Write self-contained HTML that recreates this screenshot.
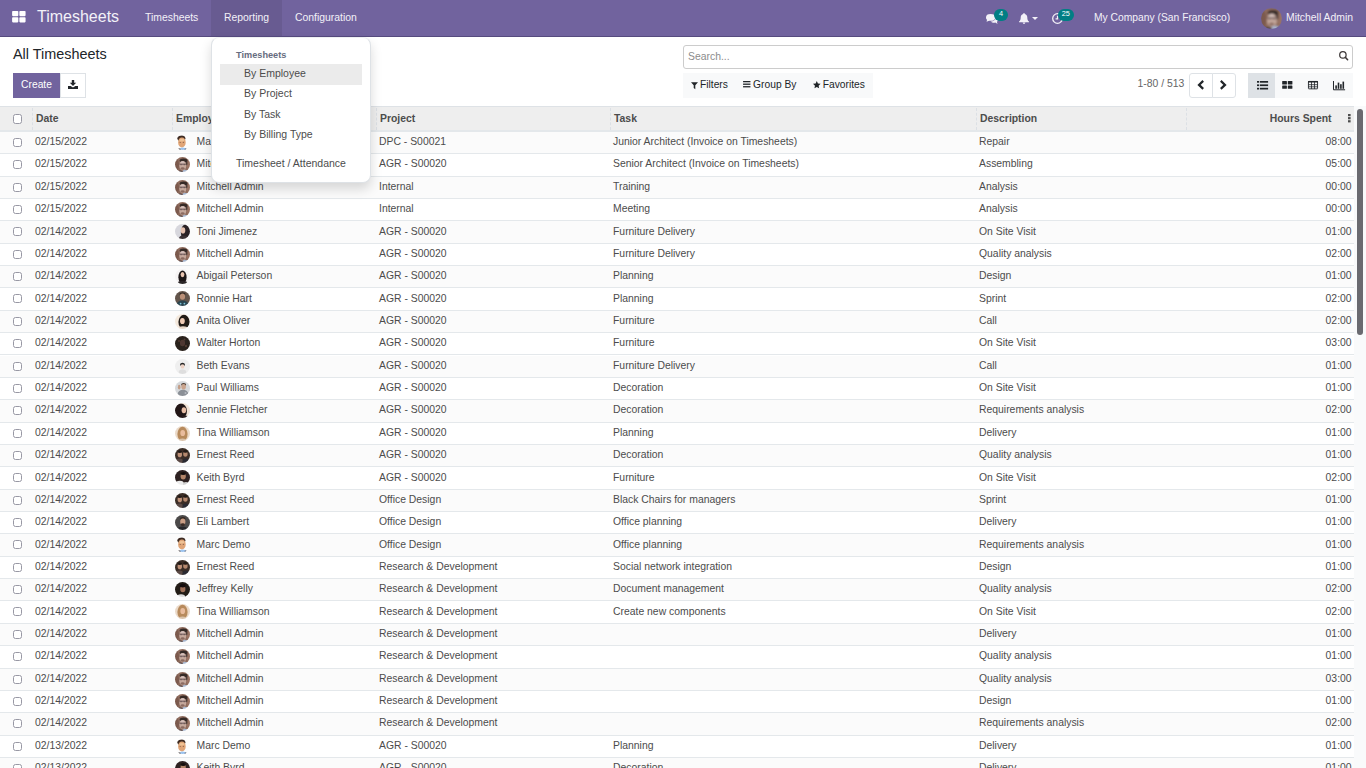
<!DOCTYPE html>
<html lang="en"><head><meta charset="utf-8"><title>Odoo - All Timesheets</title>
<style>
*{box-sizing:border-box;margin:0;padding:0}
html,body{width:1366px;height:768px;overflow:hidden;background:#fff}
body{font-family:"Liberation Sans",sans-serif;font-size:10.4px;color:#4c4c4c;position:relative}
.abs{position:absolute}
svg{position:absolute;overflow:visible}
/* navbar */
.nav{position:absolute;left:0;top:0;width:1366px;height:37px;background:#71639e;border-bottom:1px solid #564b7e;color:#fff}
.nav span{position:absolute;white-space:nowrap}
.nav .brand{left:37px;top:7px;font-size:16px;line-height:20px;color:#f3f1f8}
.nav .mi{top:0;height:36px;line-height:36px;font-size:10.4px;color:#f3f1f8}
.nav .act{left:211px;top:0;width:71px;height:36px;background:#685b91}
.badge{position:absolute;top:9px;height:12px;border-radius:6px;background:#017e84;color:#fff;font-size:7.3px;line-height:9px;text-align:center}
.uav{position:absolute;left:1261px;top:8px;width:21px;height:21px}
/* control panel */
.title{position:absolute;left:13px;top:44px;font-size:14.42px;line-height:20px;color:#212529;white-space:nowrap}
.btn-create{position:absolute;left:13px;top:73px;width:47px;height:25px;background:#71639e;color:#fff;line-height:23px;text-align:center;font-size:10.25px}
.btn-dl{position:absolute;left:60px;top:73px;width:26px;height:25px;border:1px solid #dee2e6;background:#fff}
.search{position:absolute;left:683px;top:45px;width:670px;height:24px;border:1px solid #ccc;border-radius:3px;background:#fff}
.search span{position:absolute;left:4px;top:0;line-height:21px;color:#8c8c8c;font-size:10.4px}
.fbar{position:absolute;left:683px;top:73px;width:190px;height:25px;background:#f8f9fa}
.fbar span{position:absolute;top:0;line-height:24px;font-size:10.25px;color:#212529;white-space:nowrap}
.pager{position:absolute;top:73px;line-height:21px;color:#666;white-space:nowrap}
.pgbtn{position:absolute;top:73px;height:25px;border:1px solid #dee2e6;background:#fff}
.vsw{position:absolute;top:73px;height:25px;width:26px;background:#f8f9fa}
.vsw.on{background:#dee2e6}
/* table */
.thead{position:absolute;left:0;top:106px;width:1354px;height:26px;background:#eee;border-top:1px solid #dee2e6;border-bottom:2px solid #e4e8eb;font-weight:bold;color:#4c4c4c}
.thead span{position:absolute;top:0;line-height:23px;white-space:nowrap}
.thead i{position:absolute;top:1px;height:22px;width:0;border-left:1px dashed #dce0e5}
.tbody{position:absolute;left:0;top:0;width:1354px;height:768px;overflow:hidden}
.tr{position:absolute;left:0;width:1354px;height:22.36px;border-bottom:1px solid #e4e8eb;background:#fff}
.tr.odd{background:#fbfbfb}
.tr .c{position:absolute;top:.22px;line-height:20px;white-space:nowrap}
.cb{position:absolute;left:13px;top:6px;width:9px;height:9px;border:1px solid #9898a4;border-radius:2.5px;background:#fff}
.date{left:35px}
.emp{left:196.5px}
.proj{left:379px}
.task{left:613px}
.desc{left:979px}
.hrs{right:2.4px}
.av{position:absolute;left:175px;top:3px;width:15px;height:15px;overflow:hidden}
/* scrollbar */
.sbar{position:absolute;left:1354px;top:106px;width:12px;height:662px;background:#f9fafb}
.sbar i{position:absolute;left:3px;top:3px;width:6px;height:226px;border-radius:3px;background:#6a6a70}
/* dropdown */
.dd{position:absolute;left:211px;top:37px;width:159.5px;height:145.6px;background:#fff;border-radius:8px;box-shadow:0 6px 12px rgba(0,0,0,.15);border:1px solid #dee2e6;border-top-color:#eef0f2}
.dd span{position:absolute;white-space:nowrap;color:#4c4c4c;line-height:20px;font-size:10.5px}
.dd .hl{left:8px;top:26px;width:142px;height:21px;background:#ebebeb}

</style></head>
<body>
<svg width="0" height="0" style="position:absolute"><defs><filter id="bl" x="-10%" y="-10%" width="120%" height="120%"><feGaussianBlur stdDeviation="0.6"/></filter><clipPath id="cc"><circle cx="7.5" cy="7.5" r="7.5"/></clipPath><symbol id="a-mitch" viewBox="0 0 15 15"><g clip-path="url(#cc)"><g filter="url(#bl)"><rect x="0" y="0" width="15" height="15" fill="#8f6c5d"/><ellipse cx="1.5" cy="8" rx="2.5" ry="6" fill="#75564b" opacity="0.8"/><ellipse cx="13.6" cy="7" rx="2" ry="5" fill="#9c7565" opacity="0.8"/><ellipse cx="8.6" cy="3.5" rx="3.9" ry="2.1" fill="#352a28"/><ellipse cx="11.5" cy="6" rx="1" ry="2.4" fill="#3b2f2c" opacity="0.8"/><ellipse cx="7.8" cy="8.7" rx="3.5" ry="4.8" fill="#c4a79b"/><ellipse cx="7.5" cy="5.3" rx="2.2" ry="1.1" fill="#d6c2be" opacity="0.9"/><rect x="4.5" y="6.7" width="6.6" height="1.0" fill="#463b42" opacity="0.7"/><ellipse cx="6.1" cy="7.7" rx="0.8" ry="0.6" fill="#5d4a48" opacity="0.6"/><ellipse cx="9.4" cy="7.7" rx="0.8" ry="0.6" fill="#5d4a48" opacity="0.6"/><ellipse cx="7.6" cy="11.5" rx="2.0" ry="1.2" fill="#8b6b60"/><ellipse cx="10.2" cy="14.5" rx="2.8" ry="1.7" fill="#a8b8d0"/><ellipse cx="5" cy="14.9" rx="2.8" ry="1.5" fill="#4d4042"/></g></g></symbol><symbol id="a-marc" viewBox="0 0 15 15"><g clip-path="url(#cc)"><g filter="url(#bl)"><rect x="0" y="0" width="15" height="15" fill="#fdfdfd"/><ellipse cx="6.4" cy="3.3" rx="4.0" ry="2.9" fill="#3d2c23"/><ellipse cx="6.9" cy="7.4" rx="3.8" ry="5.0" fill="#e0a577"/><ellipse cx="6.9" cy="5.2" rx="2.5" ry="1.3" fill="#f1c699" opacity="0.9"/><ellipse cx="5.2" cy="7.5" rx="0.7" ry="0.6" fill="#6a4a3a" opacity="0.7"/><ellipse cx="8.4" cy="7.3" rx="0.7" ry="0.6" fill="#6a4a3a" opacity="0.7"/><ellipse cx="7.6" cy="14.1" rx="3.0" ry="1.6" fill="#9cc4f0"/><ellipse cx="4.2" cy="14.6" rx="1.4" ry="1.0" fill="#2a2020"/><ellipse cx="10.7" cy="14.3" rx="1.2" ry="0.9" fill="#2b3a55"/></g></g></symbol><symbol id="a-toni" viewBox="0 0 15 15"><g clip-path="url(#cc)"><g filter="url(#bl)"><rect x="0" y="0" width="15" height="15" fill="#d7d7dd"/><ellipse cx="10.5" cy="8.5" rx="4.6" ry="8" fill="#2a2125"/><ellipse cx="8.0" cy="6.4" rx="2.3" ry="3.1" fill="#e6c2b0"/><ellipse cx="8.5" cy="14.5" rx="4.5" ry="3" fill="#3a3036"/></g></g></symbol><symbol id="a-abigail" viewBox="0 0 15 15"><g clip-path="url(#cc)"><g filter="url(#bl)"><rect x="0" y="0" width="15" height="15" fill="#f6f4f4"/><ellipse cx="7.5" cy="8.2" rx="4.1" ry="6.6" fill="#1b1617"/><ellipse cx="7.5" cy="5.6" rx="1.9" ry="2.6" fill="#e9c5b0"/><ellipse cx="7.5" cy="14.4" rx="5" ry="2.4" fill="#2b2628"/></g></g></symbol><symbol id="a-ronnie" viewBox="0 0 15 15"><g clip-path="url(#cc)"><g filter="url(#bl)"><rect x="0" y="0" width="15" height="15" fill="#63554c"/><ellipse cx="7.5" cy="3.2" rx="2.9" ry="1.8" fill="#2c2420"/><ellipse cx="7.5" cy="5.6" rx="2.6" ry="3.2" fill="#ba9078"/><ellipse cx="7.5" cy="14" rx="6" ry="4.6" fill="#2c4550"/><ellipse cx="5.6" cy="12.6" rx="0.9" ry="0.9" fill="#7fc4d8"/><ellipse cx="9.4" cy="12.6" rx="0.9" ry="0.9" fill="#7fc4d8"/></g></g></symbol><symbol id="a-anita" viewBox="0 0 15 15"><g clip-path="url(#cc)"><g filter="url(#bl)"><rect x="0" y="0" width="15" height="15" fill="#f4e9dd"/><ellipse cx="9" cy="8" rx="5.6" ry="7.2" fill="#241b19"/><ellipse cx="7.4" cy="7.0" rx="2.4" ry="3.1" fill="#f0ccb5"/><ellipse cx="8" cy="14.6" rx="4.5" ry="2.4" fill="#e8d8c8"/></g></g></symbol><symbol id="a-walter" viewBox="0 0 15 15"><g clip-path="url(#cc)"><g filter="url(#bl)"><rect x="0" y="0" width="15" height="15" fill="#2a211f"/><ellipse cx="7.5" cy="7" rx="2.6" ry="3.2" fill="#5a4034" opacity="0.8"/><ellipse cx="4" cy="5" rx="1" ry="1" fill="#6b4a38" opacity="0.6"/><ellipse cx="11" cy="10" rx="1.2" ry="1.2" fill="#6b4a38" opacity="0.6"/><ellipse cx="9.5" cy="3.5" rx="0.9" ry="0.9" fill="#7a5a44" opacity="0.5"/></g></g></symbol><symbol id="a-beth" viewBox="0 0 15 15"><g clip-path="url(#cc)"><g filter="url(#bl)"><rect x="0" y="0" width="15" height="15" fill="#efefef"/><ellipse cx="7.5" cy="5.6" rx="2.4" ry="1.9" fill="#262626"/><ellipse cx="7.5" cy="7.4" rx="1.9" ry="2.2" fill="#edd2c5"/><ellipse cx="7.5" cy="13.2" rx="3.8" ry="2.8" fill="#dedede"/></g></g></symbol><symbol id="a-paul" viewBox="0 0 15 15"><g clip-path="url(#cc)"><g filter="url(#bl)"><rect x="0" y="0" width="15" height="15" fill="#d6d9dc"/><ellipse cx="8.6" cy="3.6" rx="2.5" ry="1.6" fill="#4a3a30"/><ellipse cx="8.6" cy="5.7" rx="2.3" ry="2.8" fill="#caa48d"/><ellipse cx="8" cy="13" rx="5.2" ry="4.2" fill="#8b9097"/><ellipse cx="4.2" cy="6.2" rx="1.3" ry="2.4" fill="#c39d86"/><ellipse cx="10.5" cy="12" rx="1" ry="1" fill="#b5bac0"/></g></g></symbol><symbol id="a-jennie" viewBox="0 0 15 15"><g clip-path="url(#cc)"><g filter="url(#bl)"><rect x="0" y="0" width="15" height="15" fill="#f2e4d7"/><ellipse cx="5.8" cy="8" rx="6.2" ry="7.6" fill="#211716"/><ellipse cx="8.9" cy="7.2" rx="2.3" ry="3.0" fill="#e8bda4"/><ellipse cx="10" cy="14.4" rx="3.5" ry="2" fill="#2a1f1d"/></g></g></symbol><symbol id="a-tina" viewBox="0 0 15 15"><g clip-path="url(#cc)"><g filter="url(#bl)"><rect x="0" y="0" width="15" height="15" fill="#ebdac9"/><ellipse cx="7.5" cy="8" rx="5.1" ry="7.2" fill="#b78a5b"/><ellipse cx="7.7" cy="7.0" rx="2.4" ry="3.1" fill="#e9bc9d"/><ellipse cx="7.5" cy="14.6" rx="4" ry="2" fill="#d9c2aa"/></g></g></symbol><symbol id="a-ernest" viewBox="0 0 15 15"><g clip-path="url(#cc)"><g filter="url(#bl)"><rect x="0" y="0" width="15" height="15" fill="#3b2d28"/><ellipse cx="4.8" cy="6.4" rx="2.2" ry="2.8" fill="#be9177"/><ellipse cx="10.4" cy="6.0" rx="2.2" ry="2.8" fill="#b6896e"/><ellipse cx="4.8" cy="3.8" rx="2.2" ry="1.3" fill="#241a17"/><ellipse cx="10.4" cy="3.4" rx="2.2" ry="1.3" fill="#241a17"/><ellipse cx="4.5" cy="13.5" rx="3.6" ry="3" fill="#5a4a44"/><ellipse cx="11" cy="13.5" rx="3.6" ry="3" fill="#2a2a30"/></g></g></symbol><symbol id="a-keith" viewBox="0 0 15 15"><g clip-path="url(#cc)"><g filter="url(#bl)"><rect x="0" y="0" width="15" height="15" fill="#2d2320"/><ellipse cx="8.2" cy="6.3" rx="2.6" ry="3.2" fill="#b48569"/><ellipse cx="8.2" cy="3.4" rx="2.7" ry="1.5" fill="#17110f"/><ellipse cx="4.8" cy="14" rx="4.2" ry="3.2" fill="#ececec"/><ellipse cx="11" cy="14.5" rx="3" ry="2.4" fill="#d0d0d0"/></g></g></symbol><symbol id="a-eli" viewBox="0 0 15 15"><g clip-path="url(#cc)"><g filter="url(#bl)"><rect x="0" y="0" width="15" height="15" fill="#4c4849"/><ellipse cx="7.8" cy="3.8" rx="2.8" ry="1.8" fill="#352822"/><ellipse cx="7.8" cy="6.8" rx="2.6" ry="3.3" fill="#c99d84"/><ellipse cx="7.8" cy="9.7" rx="2.1" ry="1.4" fill="#3a2b25"/><ellipse cx="7.5" cy="14.6" rx="5.5" ry="3" fill="#28282b"/></g></g></symbol><symbol id="a-jeffrey" viewBox="0 0 15 15"><g clip-path="url(#cc)"><g filter="url(#bl)"><rect x="0" y="0" width="15" height="15" fill="#221a18"/><ellipse cx="7.8" cy="7.0" rx="2.6" ry="3.2" fill="#9e7058"/><ellipse cx="7.8" cy="3.8" rx="2.9" ry="1.7" fill="#120d0c"/><ellipse cx="6" cy="14.8" rx="4.2" ry="2.6" fill="#dcdcdc"/></g></g></symbol></defs></svg>
<div class="nav">
 <svg style="left:11.6px;top:10.8px" width="13.7" height="11.4" viewBox="0 0 13 11"><rect x="0" y="0" width="6" height="5" rx="0.8" fill="#fff"/><rect x="7" y="0" width="6" height="5" rx="0.8" fill="#fff"/><rect x="0" y="6" width="6" height="5" rx="0.8" fill="#fff"/><rect x="7" y="6" width="6" height="5" rx="0.8" fill="#fff"/></svg>
 <span class="brand">Timesheets</span>
 <div class="abs act"></div>
 <span class="mi" style="left:145px">Timesheets</span>
 <span class="mi" style="left:224px">Reporting</span>
 <span class="mi" style="left:295px">Configuration</span>
 <!-- comments icon -->
 <svg style="left:986px;top:14px" width="12" height="10" viewBox="0 0 12 10"><ellipse cx="4.6" cy="3.4" rx="4.6" ry="3.4" fill="#f3f1f8"/><path d="M1.2 5 L0.6 7.8 L3.6 6.4 Z" fill="#f3f1f8"/><path d="M4.5 7.6 C6 8.9 8.2 9 9.3 8.6 L11.6 9.9 L10.9 7.9 C11.8 7.2 12.2 5.9 11.3 4.6 C11 3.9 10.4 3.5 9.8 3.3 C9.9 5.8 7.6 7.5 4.5 7.6 Z" fill="#f3f1f8"/></svg>
 <div class="badge" style="left:994px;width:14px">4</div>
 <!-- bell -->
 <svg style="left:1019px;top:13px" width="10" height="11" viewBox="0 0 10 11"><path d="M5 0 C5.5 0 5.8 .4 5.8 .9 C7.4 1.3 8.3 2.7 8.3 4.4 C8.3 6.6 8.9 7.7 10 8.6 L10 9.2 L0 9.2 L0 8.6 C1.1 7.7 1.7 6.6 1.7 4.4 C1.7 2.7 2.6 1.3 4.2 .9 C4.2 .4 4.5 0 5 0 Z" fill="#f3f1f8"/><path d="M3.7 9.6 L6.3 9.6 C6.3 10.4 5.7 11 5 11 C4.3 11 3.7 10.4 3.7 9.6 Z" fill="#f3f1f8"/></svg>
 <svg style="left:1032px;top:17px" width="6" height="3" viewBox="0 0 6 3"><path d="M0 0 L6 0 L3 3 Z" fill="#f3f1f8"/></svg>
 <!-- clock -->
 <svg style="left:1051.7px;top:13.1px" width="11" height="11" viewBox="0 0 11 11"><circle cx="5.5" cy="5.5" r="4.8" fill="none" stroke="#f3f1f8" stroke-width="1.3"/><path d="M5.5 2.8 L5.5 5.8 L3.6 5.8" fill="none" stroke="#f3f1f8" stroke-width="1.2"/></svg>
 <div class="badge" style="left:1057.5px;width:16.5px;height:11.5px">25</div>
 <span class="mi" style="left:1094px;font-size:10.31px">My Company (San Francisco)</span>
 <svg class="uav" viewBox="0 0 15 15"><use href="#a-mitch"/></svg>
 <span class="mi" style="left:1286px">Mitchell Admin</span>
</div>
<div class="title">All Timesheets</div>
<div class="btn-create">Create</div>
<div class="btn-dl"><svg style="left:7px;top:6px" width="10" height="9" viewBox="0 0 10 9"><path d="M3.8 0 L6.2 0 L6.2 2.8 L8.2 2.8 L5 6 L1.8 2.8 L3.8 2.8 Z" fill="#212529"/><path d="M0 6 L2.6 6 L5 7.6 L7.4 6 L10 6 L10 9 L0 9 Z" fill="#212529"/></svg></div>
<div class="search"><span>Search...</span>
 <svg style="left:654.9px;top:5.2px" width="10" height="10" viewBox="0 0 10 10"><circle cx="3.9" cy="3.9" r="3.2" fill="none" stroke="#3d3838" stroke-width="1.25"/><path d="M6.3 6.3 L8.6 8.7" stroke="#3d3838" stroke-width="1.6" stroke-linecap="round"/></svg>
</div>
<div class="fbar">
 <svg style="left:7.8px;top:9px" width="7" height="7.4" viewBox="0 0 7 7"><path d="M0 0 L7 0 L4.3 3 L4.3 7 L2.7 5.8 L2.7 3 Z" fill="#212529"/></svg>
 <span style="left:17px">Filters</span>
 <svg style="left:60.2px;top:8.4px" width="7.5" height="6.4" viewBox="0 0 7.5 6.5"><rect x="0" y="0" width="7.5" height="1.3" fill="#212529"/><rect x="0" y="2.6" width="7.5" height="1.3" fill="#212529"/><rect x="0" y="5.2" width="7.5" height="1.3" fill="#212529"/></svg>
 <span style="left:70.1px">Group By</span>
 <svg style="left:129.8px;top:8px" width="7.6" height="7.4" viewBox="0 0 10 9.5"><path d="M5 0 L6.5 3.2 L10 3.6 L7.4 6 L8.1 9.5 L5 7.7 L1.9 9.5 L2.6 6 L0 3.6 L3.5 3.2 Z" fill="#212529"/></svg>
 <span style="left:139.7px">Favorites</span>
</div>
<div class="pager" style="left:1137.6px">1-80 / 513</div>
<div class="pgbtn" style="left:1189px;width:24px;border-radius:3px 0 0 3px"><svg style="left:7.3px;top:6.3px" width="8" height="10" viewBox="0 0 8 10"><path d="M6.2 .9 L2 4.9 L6.2 8.9" fill="none" stroke="#212529" stroke-width="2.2"/></svg></div>
<div class="pgbtn" style="left:1212px;width:24px;border-radius:0 3px 3px 0"><svg style="left:6.1px;top:6.3px" width="8" height="10" viewBox="0 0 8 10"><path d="M1.8 .9 L6 4.9 L1.8 8.9" fill="none" stroke="#212529" stroke-width="2.2"/></svg></div>
<div class="vsw on" style="left:1248px;width:27px"><svg style="left:8.7px;top:7.9px" width="11.1" height="8.5" viewBox="0 0 11.1 8.5"><rect x="0" y="0" width="2.2" height="1.7" fill="#212529"/><rect x="3" y="0" width="8.1" height="1.7" fill="#212529"/><rect x="0" y="3.4" width="2.2" height="1.7" fill="#212529"/><rect x="3" y="3.4" width="8.1" height="1.7" fill="#212529"/><rect x="0" y="6.8" width="2.2" height="1.7" fill="#212529"/><rect x="3" y="6.8" width="8.1" height="1.7" fill="#212529"/></svg></div>
<div class="vsw" style="left:1275px"><svg style="left:7px;top:8px" width="10.4" height="7.8" viewBox="0 0 10.4 7.8"><rect x=".2" y="0" width="4.7" height="3.4" rx=".5" fill="#212529"/><rect x="5.8" y="0" width="4.6" height="3.4" rx=".5" fill="#212529"/><rect x=".2" y="4.4" width="4.7" height="3.4" rx=".5" fill="#212529"/><rect x="5.8" y="4.4" width="4.6" height="3.4" rx=".5" fill="#212529"/></svg></div>
<div class="vsw" style="left:1301px"><svg style="left:6.9px;top:7.7px" width="10" height="8.3" viewBox="0 0 10 8.3"><rect x=".45" y=".45" width="9.1" height="7.4" rx=".4" fill="none" stroke="#212529" stroke-width=".9"/><rect x="0" y="0" width="10" height="1.6" rx=".4" fill="#212529"/><path d="M.4 3.7 H9.6 M.4 5.8 H9.6 M3.5 1 V7.9 M6.5 1 V7.9" stroke="#212529" stroke-width=".8" fill="none"/></svg></div>
<div class="vsw" style="left:1327px"><svg style="left:5.9px;top:7.7px" width="12.1" height="9.3" viewBox="0 0 12.1 9.3"><path d="M.5 0 V8.8 H12.1" fill="none" stroke="#212529" stroke-width="1"/><rect x="2.3" y="4.4" width="1.6" height="3.4" fill="#212529"/><rect x="4.7" y="1.6" width="1.6" height="6.2" fill="#212529"/><rect x="7.1" y="3.2" width="1.6" height="4.6" fill="#212529"/><rect x="9.5" y=".6" width="1.6" height="7.2" fill="#212529"/></svg></div>
<div class="thead">
 <div class="cb" style="top:7px;height:10px"></div>
 <i style="left:32px"></i><span style="left:36px">Date</span>
 <i style="left:172px"></i><span style="left:176px">Employee</span>
 <i style="left:376px"></i><span style="left:380px">Project</span>
 <i style="left:610px"></i><span style="left:614px">Task</span>
 <i style="left:976px"></i><span style="left:980px">Description</span>
 <i style="left:1186px"></i><span style="right:22.5px">Hours Spent</span>
 <svg style="left:1347.5px;top:7px" width="3" height="9" viewBox="0 0 3 9"><rect x="0" y="0" width="2.6" height="2.2" fill="#4c4c4c"/><rect x="0" y="3.1" width="2.6" height="2.2" fill="#4c4c4c"/><rect x="0" y="6.2" width="2.6" height="2.2" fill="#4c4c4c"/></svg>
</div>
<div class="sbar"><i></i></div>
<div class="tbody">
<div class="tr odd" style="top:131.90px"><span class="cb"></span><span class="c date">02/15/2022</span><svg class="av" viewBox="0 0 15 15"><use href="#a-marc"/></svg><span class="c emp">Marc Demo</span><span class="c proj">DPC - S00021</span><span class="c task">Junior Architect (Invoice on Timesheets)</span><span class="c desc">Repair</span><span class="c hrs">08:00</span></div>
<div class="tr" style="top:154.26px"><span class="cb"></span><span class="c date">02/15/2022</span><svg class="av" viewBox="0 0 15 15"><use href="#a-mitch"/></svg><span class="c emp">Mitchell Admin</span><span class="c proj">AGR - S00020</span><span class="c task">Senior Architect (Invoice on Timesheets)</span><span class="c desc">Assembling</span><span class="c hrs">05:00</span></div>
<div class="tr odd" style="top:176.62px"><span class="cb"></span><span class="c date">02/15/2022</span><svg class="av" viewBox="0 0 15 15"><use href="#a-mitch"/></svg><span class="c emp">Mitchell Admin</span><span class="c proj">Internal</span><span class="c task">Training</span><span class="c desc">Analysis</span><span class="c hrs">00:00</span></div>
<div class="tr" style="top:198.98px"><span class="cb"></span><span class="c date">02/15/2022</span><svg class="av" viewBox="0 0 15 15"><use href="#a-mitch"/></svg><span class="c emp">Mitchell Admin</span><span class="c proj">Internal</span><span class="c task">Meeting</span><span class="c desc">Analysis</span><span class="c hrs">00:00</span></div>
<div class="tr odd" style="top:221.34px"><span class="cb"></span><span class="c date">02/14/2022</span><svg class="av" viewBox="0 0 15 15"><use href="#a-toni"/></svg><span class="c emp">Toni Jimenez</span><span class="c proj">AGR - S00020</span><span class="c task">Furniture Delivery</span><span class="c desc">On Site Visit</span><span class="c hrs">01:00</span></div>
<div class="tr" style="top:243.70px"><span class="cb"></span><span class="c date">02/14/2022</span><svg class="av" viewBox="0 0 15 15"><use href="#a-mitch"/></svg><span class="c emp">Mitchell Admin</span><span class="c proj">AGR - S00020</span><span class="c task">Furniture Delivery</span><span class="c desc">Quality analysis</span><span class="c hrs">02:00</span></div>
<div class="tr odd" style="top:266.06px"><span class="cb"></span><span class="c date">02/14/2022</span><svg class="av" viewBox="0 0 15 15"><use href="#a-abigail"/></svg><span class="c emp">Abigail Peterson</span><span class="c proj">AGR - S00020</span><span class="c task">Planning</span><span class="c desc">Design</span><span class="c hrs">01:00</span></div>
<div class="tr" style="top:288.42px"><span class="cb"></span><span class="c date">02/14/2022</span><svg class="av" viewBox="0 0 15 15"><use href="#a-ronnie"/></svg><span class="c emp">Ronnie Hart</span><span class="c proj">AGR - S00020</span><span class="c task">Planning</span><span class="c desc">Sprint</span><span class="c hrs">02:00</span></div>
<div class="tr odd" style="top:310.78px"><span class="cb"></span><span class="c date">02/14/2022</span><svg class="av" viewBox="0 0 15 15"><use href="#a-anita"/></svg><span class="c emp">Anita Oliver</span><span class="c proj">AGR - S00020</span><span class="c task">Furniture</span><span class="c desc">Call</span><span class="c hrs">02:00</span></div>
<div class="tr" style="top:333.14px"><span class="cb"></span><span class="c date">02/14/2022</span><svg class="av" viewBox="0 0 15 15"><use href="#a-walter"/></svg><span class="c emp">Walter Horton</span><span class="c proj">AGR - S00020</span><span class="c task">Furniture</span><span class="c desc">On Site Visit</span><span class="c hrs">03:00</span></div>
<div class="tr odd" style="top:355.50px"><span class="cb"></span><span class="c date">02/14/2022</span><svg class="av" viewBox="0 0 15 15"><use href="#a-beth"/></svg><span class="c emp">Beth Evans</span><span class="c proj">AGR - S00020</span><span class="c task">Furniture Delivery</span><span class="c desc">Call</span><span class="c hrs">01:00</span></div>
<div class="tr" style="top:377.86px"><span class="cb"></span><span class="c date">02/14/2022</span><svg class="av" viewBox="0 0 15 15"><use href="#a-paul"/></svg><span class="c emp">Paul Williams</span><span class="c proj">AGR - S00020</span><span class="c task">Decoration</span><span class="c desc">On Site Visit</span><span class="c hrs">01:00</span></div>
<div class="tr odd" style="top:400.22px"><span class="cb"></span><span class="c date">02/14/2022</span><svg class="av" viewBox="0 0 15 15"><use href="#a-jennie"/></svg><span class="c emp">Jennie Fletcher</span><span class="c proj">AGR - S00020</span><span class="c task">Decoration</span><span class="c desc">Requirements analysis</span><span class="c hrs">02:00</span></div>
<div class="tr" style="top:422.58px"><span class="cb"></span><span class="c date">02/14/2022</span><svg class="av" viewBox="0 0 15 15"><use href="#a-tina"/></svg><span class="c emp">Tina Williamson</span><span class="c proj">AGR - S00020</span><span class="c task">Planning</span><span class="c desc">Delivery</span><span class="c hrs">01:00</span></div>
<div class="tr odd" style="top:444.94px"><span class="cb"></span><span class="c date">02/14/2022</span><svg class="av" viewBox="0 0 15 15"><use href="#a-ernest"/></svg><span class="c emp">Ernest Reed</span><span class="c proj">AGR - S00020</span><span class="c task">Decoration</span><span class="c desc">Quality analysis</span><span class="c hrs">01:00</span></div>
<div class="tr" style="top:467.30px"><span class="cb"></span><span class="c date">02/14/2022</span><svg class="av" viewBox="0 0 15 15"><use href="#a-keith"/></svg><span class="c emp">Keith Byrd</span><span class="c proj">AGR - S00020</span><span class="c task">Furniture</span><span class="c desc">On Site Visit</span><span class="c hrs">02:00</span></div>
<div class="tr odd" style="top:489.66px"><span class="cb"></span><span class="c date">02/14/2022</span><svg class="av" viewBox="0 0 15 15"><use href="#a-ernest"/></svg><span class="c emp">Ernest Reed</span><span class="c proj">Office Design</span><span class="c task">Black Chairs for managers</span><span class="c desc">Sprint</span><span class="c hrs">01:00</span></div>
<div class="tr" style="top:512.02px"><span class="cb"></span><span class="c date">02/14/2022</span><svg class="av" viewBox="0 0 15 15"><use href="#a-eli"/></svg><span class="c emp">Eli Lambert</span><span class="c proj">Office Design</span><span class="c task">Office planning</span><span class="c desc">Delivery</span><span class="c hrs">01:00</span></div>
<div class="tr odd" style="top:534.38px"><span class="cb"></span><span class="c date">02/14/2022</span><svg class="av" viewBox="0 0 15 15"><use href="#a-marc"/></svg><span class="c emp">Marc Demo</span><span class="c proj">Office Design</span><span class="c task">Office planning</span><span class="c desc">Requirements analysis</span><span class="c hrs">01:00</span></div>
<div class="tr" style="top:556.74px"><span class="cb"></span><span class="c date">02/14/2022</span><svg class="av" viewBox="0 0 15 15"><use href="#a-ernest"/></svg><span class="c emp">Ernest Reed</span><span class="c proj">Research &amp; Development</span><span class="c task">Social network integration</span><span class="c desc">Design</span><span class="c hrs">01:00</span></div>
<div class="tr odd" style="top:579.10px"><span class="cb"></span><span class="c date">02/14/2022</span><svg class="av" viewBox="0 0 15 15"><use href="#a-jeffrey"/></svg><span class="c emp">Jeffrey Kelly</span><span class="c proj">Research &amp; Development</span><span class="c task">Document management</span><span class="c desc">Quality analysis</span><span class="c hrs">02:00</span></div>
<div class="tr" style="top:601.46px"><span class="cb"></span><span class="c date">02/14/2022</span><svg class="av" viewBox="0 0 15 15"><use href="#a-tina"/></svg><span class="c emp">Tina Williamson</span><span class="c proj">Research &amp; Development</span><span class="c task">Create new components</span><span class="c desc">On Site Visit</span><span class="c hrs">02:00</span></div>
<div class="tr odd" style="top:623.82px"><span class="cb"></span><span class="c date">02/14/2022</span><svg class="av" viewBox="0 0 15 15"><use href="#a-mitch"/></svg><span class="c emp">Mitchell Admin</span><span class="c proj">Research &amp; Development</span><span class="c task"></span><span class="c desc">Delivery</span><span class="c hrs">01:00</span></div>
<div class="tr" style="top:646.18px"><span class="cb"></span><span class="c date">02/14/2022</span><svg class="av" viewBox="0 0 15 15"><use href="#a-mitch"/></svg><span class="c emp">Mitchell Admin</span><span class="c proj">Research &amp; Development</span><span class="c task"></span><span class="c desc">Quality analysis</span><span class="c hrs">01:00</span></div>
<div class="tr odd" style="top:668.54px"><span class="cb"></span><span class="c date">02/14/2022</span><svg class="av" viewBox="0 0 15 15"><use href="#a-mitch"/></svg><span class="c emp">Mitchell Admin</span><span class="c proj">Research &amp; Development</span><span class="c task"></span><span class="c desc">Quality analysis</span><span class="c hrs">03:00</span></div>
<div class="tr" style="top:690.90px"><span class="cb"></span><span class="c date">02/14/2022</span><svg class="av" viewBox="0 0 15 15"><use href="#a-mitch"/></svg><span class="c emp">Mitchell Admin</span><span class="c proj">Research &amp; Development</span><span class="c task"></span><span class="c desc">Design</span><span class="c hrs">01:00</span></div>
<div class="tr odd" style="top:713.26px"><span class="cb"></span><span class="c date">02/14/2022</span><svg class="av" viewBox="0 0 15 15"><use href="#a-mitch"/></svg><span class="c emp">Mitchell Admin</span><span class="c proj">Research &amp; Development</span><span class="c task"></span><span class="c desc">Requirements analysis</span><span class="c hrs">02:00</span></div>
<div class="tr" style="top:735.62px"><span class="cb"></span><span class="c date">02/13/2022</span><svg class="av" viewBox="0 0 15 15"><use href="#a-marc"/></svg><span class="c emp">Marc Demo</span><span class="c proj">AGR - S00020</span><span class="c task">Planning</span><span class="c desc">Delivery</span><span class="c hrs">01:00</span></div>
<div class="tr odd" style="top:757.98px"><span class="cb"></span><span class="c date">02/13/2022</span><svg class="av" viewBox="0 0 15 15"><use href="#a-keith"/></svg><span class="c emp">Keith Byrd</span><span class="c proj">AGR - S00020</span><span class="c task">Decoration</span><span class="c desc">Delivery</span><span class="c hrs">01:00</span></div>
</div>
<div class="dd">
 <div class="abs hl"></div>
 <span style="left:24px;top:7px;font-weight:bold;font-size:9.2px;color:#666c80">Timesheets</span>
 <span style="left:32px;top:25px">By Employee</span>
 <span style="left:32px;top:45px">By Project</span>
 <span style="left:32px;top:66px">By Task</span>
 <span style="left:32px;top:86px">By Billing Type</span>
 <span style="left:24px;top:115px">Timesheet / Attendance</span>
</div>
</body></html>
